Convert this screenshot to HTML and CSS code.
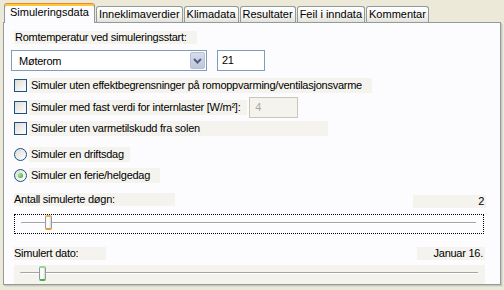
FILE: index.html
```html
<!DOCTYPE html>
<html lang="no">
<head>
  <meta charset="UTF-8" />
  <meta name="viewport" content="width=device-width, initial-scale=1.0"/>
  <title>Simuleringsdata</title>
  <link rel="stylesheet" href="styles.css">
</head>
<body>
  <div class="tab-control">
    <div class="tab-strip">
      <div class="tab active">Simuleringsdata</div>
      <div class="tab">Inneklimaverdier</div>
      <div class="tab">Klimadata</div>
      <div class="tab">Resultater</div>
      <div class="tab">Feil i inndata</div>
      <div class="tab">Kommentar</div>
    </div>

    <div class="tab-page">
      <div class="label label-start">Romtemperatur ved simuleringsstart:</div>

      <div class="start-row">
        <div class="combo">
          <span class="combo-text">Møterom</span>
          <span class="combo-button">
            <svg width="9" height="6" viewBox="0 0 9 6">
              <path d="M1 1 L4.5 4.5 L8 1" fill="none" stroke="#4d6185" stroke-width="2"/>
            </svg>
          </span>
        </div>
        <div class="textbox textbox-temp">21</div>
      </div>

      <div class="option option-1">
        <span class="checkbox"></span>
        <span class="label label-check1">Simuler uten effektbegrensninger på romoppvarming/ventilasjonsvarme</span>
      </div>

      <div class="option option-2">
        <span class="checkbox"></span>
        <span class="label label-check2">Simuler med fast verdi for internlaster [W/m²]:</span>
        <div class="textbox textbox-disabled">4</div>
      </div>

      <div class="option option-3">
        <span class="checkbox"></span>
        <span class="label label-check3">Simuler uten varmetilskudd fra solen</span>
      </div>

      <div class="option option-radio1">
        <span class="radio"></span>
        <span class="label label-radio1">Simuler en driftsdag</span>
      </div>

      <div class="option option-radio2">
        <span class="radio checked"></span>
        <span class="label label-radio2">Simuler en ferie/helgedag</span>
      </div>

      <div class="value-row value-row-days">
        <span class="label label-days">Antall simulerte døgn:</span>
        <span class="label value value-days">2</span>
      </div>

      <div class="slider slider-focus">
        <span class="track"></span>
        <span class="thumb thumb-hot" style="left: 30px"></span>
      </div>

      <div class="value-row value-row-date">
        <span class="label label-date">Simulert dato:</span>
        <span class="label value value-date">Januar 16.</span>
      </div>

      <div class="slider slider-date">
        <span class="track"></span>
        <span class="thumb thumb-green" style="left: 25px"></span>
      </div>
    </div>
  </div>
</body>
</html>
```

FILE: styles.css
```css
*, *::before, *::after {
  box-sizing: border-box;
}

html, body {
  margin: 0;
  padding: 0;
}

body {
  font-family: "Liberation Sans", Arial, sans-serif;
  font-size: 11px;
  color: #000;
  background: #ece9d8;
  width: 504px;
  height: 290px;
  overflow: hidden;
}

.tab-control {
  padding: 3px 0 0 3px;
  width: 501px;
}

/* tab strip */

.tab-strip {
  display: flex;
  align-items: flex-end;
  height: 19px;
  padding-left: 1px;
}

.tab {
  height: 16px;
  padding: 1px 2px 0;
  margin-right: 1px;
  border: 1px solid #919b9c;
  border-bottom: none;
  border-radius: 3px 3px 0 0;
  background: linear-gradient(#ffffff, #f3f3ef 60%, #e3e2da);
  line-height: 13px;
  white-space: nowrap;
}

.tab.active {
  position: relative;
  z-index: 1;
  height: 20px;
  margin-bottom: -1px;
  padding: 2px 5px 0;
  border-top: 1px solid #e68b2c;
  box-shadow: inset 0 2px 0 #ffc73c;
  background: #fcfcfe;
}

/* page */

.tab-page {
  height: 263px;
  border: 1px solid #919b9c;
  background: #fcfcfe;
  box-shadow: 1px 1px 0 #c8c7be, 2px 2px 0 #dedcd0;
  letter-spacing: -0.25px;
}

.label {
  display: inline-block;
  height: 13px;
  line-height: 13px;
  background: #f4f3ee;
  white-space: nowrap;
}

.label-start {
  display: block;
  width: 183px;
  margin: 8px 0 0 10px;
  padding-left: 1px;
}

.start-row {
  display: flex;
  gap: 10px;
  margin: 6px 0 0 7px;
}

.combo {
  display: flex;
  align-items: center;
  justify-content: space-between;
  width: 196px;
  height: 21px;
  padding: 1px;
  border: 1px solid #7f9db9;
  background: #fff;
}

.combo-text {
  padding-left: 6px;
}

.combo-button {
  display: flex;
  align-items: center;
  justify-content: center;
  width: 15px;
  height: 17px;
  border-radius: 2px;
  background: linear-gradient(#d8dcea, #bfc6da);
  border: 1px solid #b7bfd6;
}

.textbox {
  height: 21px;
  padding: 3px 4px;
  border: 1px solid #7f9db9;
  background: #fff;
  line-height: 13px;
}

.textbox-temp {
  width: 48px;
}

.textbox-disabled {
  width: 49px;
  margin-left: auto;
  padding-left: 5px;
  border-color: #c9c7ba;
  background: #f4f3ee;
  color: #aca899;
}

/* check boxes and radio buttons */

.option {
  display: flex;
  align-items: center;
  gap: 2px;
  margin-left: 10px;
  height: 15px;
}

.option .label {
  height: 15px;
  line-height: 15px;
  padding-left: 2px;
}

.option-1 {
  margin-top: 7px;
}

.option-2 {
  margin-top: 4px;
  height: 21px;
  width: 284px;
}

.option-3 {
  margin-top: 3px;
}

.option-radio1 {
  margin-top: 11px;
}

.option-radio2 {
  margin-top: 6px;
}

.label-check1 { width: 343px; }
.label-check2 { width: 220px; }
.label-check3 { width: 299px; }
.label-radio1 { width: 101px; }
.label-radio2 { width: 131px; }

.checkbox {
  width: 13px;
  height: 13px;
  border: 1px solid #1c5180;
  background: linear-gradient(135deg, #dcdcd7, #ffffff);
}

.radio {
  position: relative;
  width: 13px;
  height: 13px;
  border: 1px solid #1c5180;
  border-radius: 50%;
  background: linear-gradient(135deg, #dcdcd7, #ffffff);
}

.radio.checked::after {
  content: "";
  position: absolute;
  left: 3px;
  top: 3px;
  width: 5px;
  height: 5px;
  border-radius: 50%;
  background: radial-gradient(circle at 35% 35%, #9ef09e, #21a121);
}

/* value rows and sliders */

.value-row {
  display: flex;
  justify-content: space-between;
  margin: 0 14px 0 10px;
}

.value-row-days {
  margin-top: 10px;
}

.value-row-date {
  margin-top: 13px;
  margin-right: 15px;
}

.label-days { width: 161px; }
.label-date { width: 92px; }

.value {
  text-align: right;
  padding-right: 2px;
}

.value-days {
  width: 73px;
  margin-top: 2px;
}

.value-date {
  width: 68px;
}

.slider {
  position: relative;
  margin: 0 16px 0 10px;
  height: 20px;
  background: #f4f3ee;
}

.slider-focus {
  margin-top: 6px;
  border: 1px dotted #000;
  background: #fcfcfe;
}

.slider-date {
  margin-top: 5px;
  margin-right: 15px;
  height: 19px;
}

.track {
  position: absolute;
  left: 6px;
  right: 7px;
  top: 7px;
  height: 2px;
  border-top: 1px solid #a5a49d;
  border-bottom: 1px solid #fff;
  border-left: 1px solid #d5d4cc;
}

.thumb {
  position: absolute;
  top: 0;
  width: 7px;
  height: 15px;
  border: 1px solid #8e9aa6;
  border-radius: 2px;
  background: linear-gradient(90deg, #f4f4f0, #ffffff 50%, #dadad2);
}

.thumb-hot {
  border-top: 2px solid #f5b33d;
  border-bottom: 2px solid #e8982a;
}

.thumb-green {
  top: 1px;
  border-top: 2px solid #8bdc8b;
  border-bottom: 2px solid #3cb83c;
}
```
